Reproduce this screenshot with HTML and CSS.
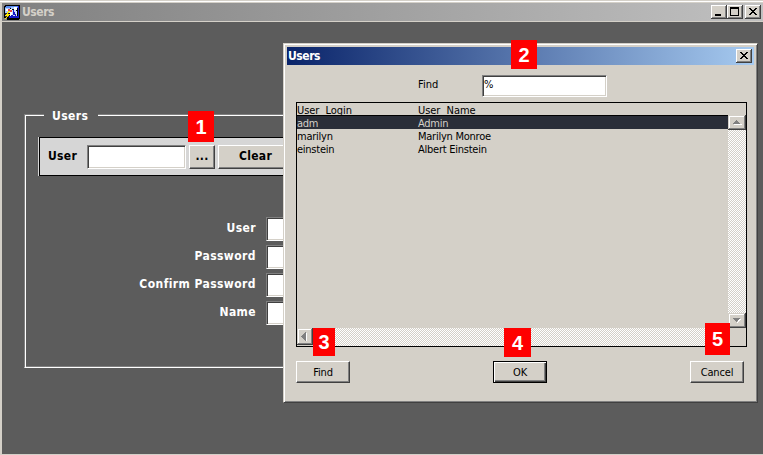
FILE: index.html
```
<!DOCTYPE html>
<html lang="en">
<head>
<meta charset="utf-8">
<title>Users</title>
<link rel="stylesheet" href="styles.css">
</head>
<body>
<main class="window">
  <header class="titlebar">
    <svg class="app-icon" width="16" height="16" viewBox="0 0 16 16" shape-rendering="crispEdges">
      <path fill="#000" d="M0 2h1V1h15v14h-1v1H3v-2H0z"/>
      <path fill="#5a8cf0" d="M1 3h1V2h12v2H1z"/>
      <path fill="#a8ccff" d="M1 4h5v5H1zM7 3h3v2H7z"/>
      <path fill="#fff" d="M2 5h2v2H2zM10 3h3v3h-3zM6 5h2v7H6z"/>
      <path fill="#e84848" d="M4 5h2v1h2v2H6V7H4z"/>
      <path fill="#1818c8" d="M14 2h1v12H5v-2h2v-1h2V6h1v2h1v2h1v2h2z"/>
      <path fill="#d0e0ff" d="M8 6h1v5H8zM10 6h2v1h1v5h-1v-2h-1V8h-1zM9 11h2v1H9z"/>
      <path fill="#202040" d="M1 9h4v4H1z"/>
      <path fill="#ffe800" d="M4 7h2v1H5v1H4v1h2v1H5v1H4v1H3v1H2v1H1v-1h1v-1h1v-1H1v-1h1v-1h1V8h1z"/>
    </svg>
    <h1 class="title">Users</h1>
    <div class="controls">
      <span class="control"><svg width="16" height="14" viewBox="0 0 16 14" shape-rendering="crispEdges"><path d="M4 9h6v2H4z"/></svg></span>
      <span class="control"><svg width="16" height="14" viewBox="0 0 16 14" shape-rendering="crispEdges"><path fill-rule="evenodd" d="M3 2h9v9H3zM4 4v6h7V4z"/></svg></span>
      <span class="control control-close"><svg width="16" height="14" viewBox="0 0 16 14" shape-rendering="crispEdges"><path d="M4 3h2v1h1v1h2V4h1V3h2v1h-1v1h-1v1H9v1h1v1h1v1h1v1h-2V9H9V8H7v1H6v1H4V9h1V8h1V7h1V6H6V5H5V4H4z"/></svg></span>
    </div>
  </header>
  <section class="workspace">
    <div class="group">
      <h2 class="legend">Users</h2>
      <div class="toolbar">
        <span class="toolbar-label">User</span>
        <span class="field search-field"></span>
        <span class="button browse">...</span>
        <span class="button clear">Clear</span>
      </div>
      <div class="form">
        <span class="label">User</span><span class="field"></span>
        <span class="label">Password</span><span class="field"></span>
        <span class="label">Confirm Password</span><span class="field"></span>
        <span class="label">Name</span><span class="field"></span>
      </div>
    </div>
  </section>
</main>

<section class="dialog">
  <header class="dialog-title">
    <h2 class="title">Users</h2>
    <span class="control"><svg width="16" height="14" viewBox="0 0 16 14" shape-rendering="crispEdges"><path d="M4 3h2v1h1v1h2V4h1V3h2v1h-1v1h-1v1H9v1h1v1h1v1h1v1h-2V9H9V8H7v1H6v1H4V9h1V8h1V7h1V6H6V5H5V4H4z"/></svg></span>
  </header>
  <div class="find-row">
    <span class="find-label">Find</span>
    <span class="field find-field">%</span>
  </div>
  <div class="list">
    <div class="row head"><span>User&nbsp; Login</span><span>User&nbsp; Name</span></div>
    <div class="list-body">
      <div class="rows">
        <div class="row selected"><span>adm</span><span>Admin</span></div>
        <div class="row"><span>marilyn</span><span>Marilyn Monroe</span></div>
        <div class="row"><span>einstein</span><span>Albert Einstein</span></div>
      </div>
      <div class="scroll-v">
        <span class="scroll-button"><svg width="18" height="15" viewBox="0 0 18 15" shape-rendering="crispEdges"><path fill="#fff" d="M6 9h8v1H6z"/><path fill="#808080" d="M8 5h1v1h1v1h1v1h1v1H5V8h1V7h1V6h1z"/></svg></span>
        <span class="scroll-button"><svg width="18" height="15" viewBox="0 0 18 15" shape-rendering="crispEdges"><path fill="#fff" d="M11 6h2v1h-1v1h-1v1h-1v1H9V9h1z"/><path fill="#808080" d="M5 5h7v1h-1v1h-1v1H9v1H8V8H7V7H6V6H5z"/></svg></span>
      </div>
    </div>
    <div class="scroll-h">
      <span class="scroll-button"><svg width="16" height="17" viewBox="0 0 16 17" shape-rendering="crispEdges"><path fill="#fff" d="M9 5h1v8H9z"/><path fill="#808080" d="M8 4h1v9H8v-1H7v-1H6v-1H5V9H4V8h1V7h1V6h1V5h1z"/></svg></span>
      <span class="track"></span>
    </div>
  </div>
  <footer class="actions">
    <span class="button">Find</span>
    <span class="button default">OK</span>
    <span class="button cancel">Cancel</span>
  </footer>
</section>

<b class="badge badge-1">1</b>
<b class="badge badge-2">2</b>
<b class="badge badge-3">3</b>
<b class="badge badge-4">4</b>
<b class="badge badge-5">5</b>
</body>
</html>
```
FILE: styles.css
```
* { box-sizing: border-box; }

body {
  margin: 0;
  width: 763px;
  height: 455px;
  overflow: hidden;
  position: relative;
  font: 11px/13px "DejaVu Sans Condensed", "DejaVu Sans", sans-serif;
  color: #000;
}

svg { display: block; }
h1, h2 { margin: 0; font-size: inherit; }

.window {
  width: 763px;
  height: 455px;
  padding: 3px 0 1px 2px;
  background: #d4d0c8;
  box-shadow: inset 0 1px #d4d0c8, inset 0 2px #fff;
}

.titlebar {
  display: flex;
  align-items: center;
  width: 761px;
  height: 18px;
  padding: 0 2px;
  background: linear-gradient(90deg, #808080, #c0c0c0);
}

.title { font-weight: bold; font-size: 12px; line-height: 18px; letter-spacing: -0.45px; }
.titlebar .title { margin-left: 2px; color: #d4d0c8; }
.controls { display: flex; margin-left: auto; }

.control {
  width: 16px;
  height: 14px;
  background: #d4d0c8;
  box-shadow: inset -1px -1px #404040, inset 1px 1px #fff, inset -2px -2px #808080;
}
.control-close { margin-left: 2px; }

.workspace {
  height: 432px;
  margin-top: 1px;
  padding: 92px 0 0 22px;
  background: #5c5c5c;
}

.group {
  width: 720px;
  height: 254px;
  border: 1px solid #808080;
  border-bottom-color: #fff;
  box-shadow: inset 1px 1px #fff, inset 0 -1px #808080;
}

.legend {
  width: 54px;
  height: 16px;
  margin: -8px 0 0 19px;
  padding-left: 8px;
  background: #5c5c5c;
  color: #fff;
  font-size: 12px;
  line-height: 18px;
  letter-spacing: .4px;
}

.toolbar {
  display: flex;
  align-items: center;
  width: 600px;
  height: 39px;
  margin: 14px 0 0 14px;
  border: 1px solid #000;
  background: #d6d6d6;
  box-shadow: -1px 0 #d6d6d6;
  font-weight: bold;
  font-size: 12px;
  letter-spacing: .3px;
}
.toolbar-label { width: 47px; padding-left: 8px; }

.field {
  height: 24px;
  background: #fff;
  border: 1px solid;
  border-color: #808080 #fff #fff #808080;
  box-shadow: inset 1px 1px #404040, inset -1px -1px #d4d0c8;
}
.search-field { width: 99px; }

.button {
  display: flex;
  align-items: center;
  justify-content: center;
  background: #d4d0c8;
  border: 1px solid;
  border-color: #fff #404040 #404040 #fff;
  box-shadow: inset -1px -1px #808080;
}
.browse { width: 26px; height: 24px; margin-left: 3px; }
.clear { width: 75px; height: 24px; margin-left: 3px; }

.form {
  display: grid;
  grid-template-columns: 231px 220px;
  column-gap: 10px;
  row-gap: 4px;
  margin-top: 41px;
}
.label {
  color: #fff;
  font-weight: bold;
  font-size: 12px;
  line-height: 22px;
  letter-spacing: .42px;
  text-align: right;
}

.dialog {
  position: absolute;
  left: 283px;
  top: 43px;
  width: 475px;
  height: 360px;
  padding: 3px;
  border: 1px solid;
  border-color: #d4d0c8 #404040 #404040 #d4d0c8;
  background: #d4d0c8;
  box-shadow: inset 1px 1px #fff, inset -1px -1px #808080;
}

.dialog-title {
  display: flex;
  align-items: center;
  justify-content: space-between;
  width: 467px;
  height: 18px;
  padding: 0 2px 0 1px;
  background: linear-gradient(90deg, #0a246a, #a6caf0);
  color: #fff;
}

.find-row { display: flex; height: 22px; margin: 10px 0 0 131px; }
.find-label { width: 64px; line-height: 19px; }
.find-field { width: 125px; height: 22px; padding: 1px; line-height: 15px; }

.list {
  width: 451px;
  height: 245px;
  margin: 5px 0 0 9px;
  border: 1px solid #000;
}
.row { display: grid; grid-template-columns: 121px 1fr; height: 13px; line-height: 15px; letter-spacing: -.25px; }
.head { height: 12px; line-height: 15px; letter-spacing: -.05px; }
.list-body { display: flex; height: 213px; }
.rows { width: 431px; border-top: 1px solid #000; }
.selected { background: #2a2e38; color: #d4d0c8; }

.scroll-v {
  display: flex;
  flex-direction: column;
  justify-content: space-between;
  width: 18px;
}
.scroll-v, .track {
  background: repeating-conic-gradient(#fff 0 25%, #d4d0c8 0 50%) 0 0 / 2px 2px;
}
.scroll-button {
  background: #d4d0c8;
  box-shadow: inset -1px -1px #404040, inset 1px 1px #d4d0c8, inset -2px -2px #808080, inset 2px 2px #fff;
}
.scroll-h { display: flex; height: 18px; }
.scroll-h .scroll-button { height: 17px; }
.track { width: 415px; }

.actions { display: flex; margin: 14px 0 0 9px; }
.actions .button { width: 54px; height: 22px; letter-spacing: -.15px; }
.actions .default { margin-left: 143px; border-color: #000; box-shadow: inset 1px 1px #fff, inset -1px -1px #404040, inset -2px -2px #808080; }
.actions .cancel { margin-left: 143px; }

.badge {
  position: absolute;
  display: flex;
  align-items: center;
  justify-content: center;
  background: #f00;
  color: #fff;
  font: bold 20px/24px "Liberation Sans", Arial, sans-serif;
}
.badge-1 { left: 188px; top: 111px; width: 26px; height: 31px; }
.badge-2 { left: 511px; top: 40px; width: 26px; height: 29px; }
.badge-3 { left: 313px; top: 328px; width: 22px; height: 28px; }
.badge-4 { left: 504px; top: 328px; width: 27px; height: 29px; }
.badge-5 { left: 705px; top: 323px; width: 25px; height: 32px; }
```
